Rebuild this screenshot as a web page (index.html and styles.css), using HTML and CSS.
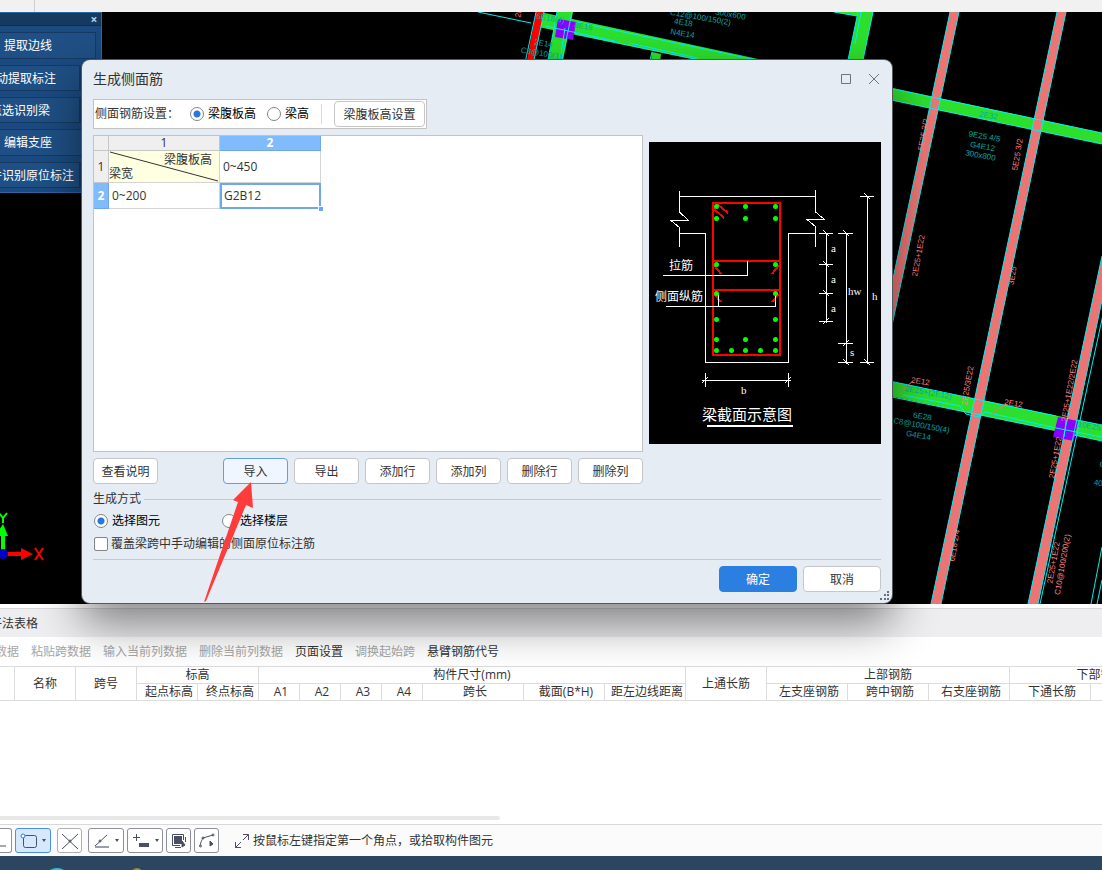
FILE: index.html
```html
<!DOCTYPE html>
<html lang="zh-CN">
<head>
  <meta charset="utf-8">
  <meta name="viewport" content="width=device-width, initial-scale=1.0">
  <title>生成侧面筋</title>
  <link rel="stylesheet" href="styles.css">
</head>
<body>
  <div class="ribbon-edge"><span></span></div>

  <main class="workspace">
    <svg class="cad" viewBox="0 12 1102 592" preserveAspectRatio="xMinYMin slice">
      <!-- green beams -->
      <g class="beam-green">
        <path d="M557 12H573L563 60L552 110H538L548 60Z"/>
        <path d="M858 12H873L863 60L853 110H838L848 60Z"/>
        <path d="M540 12L1102 133V144L538 27Z"/>
        <path d="M834 12H860L857 16Z"/>
        <path d="M652 52L661 54L659 70H650Z"/>
        <path d="M880 379L1102 425V441L880 394Z"/>
      </g>
      <path class="beam-red" d="M536 12H544L534 60L524 100H517L527 60Z"/>
      <!-- pink beams -->
      <g class="beam-pink">
        <path d="M950 12H959L891 330H882Z"/>
        <path d="M1057 12H1066L941 604H931Z"/>
        <path d="M1102 256V300L1038 604H1028Z"/>
      </g>
      <g class="column">
        <path d="M558 19L576 22L573 40L555 37Z"/>
        <path d="M1058 417L1078 421L1074 441L1053 437Z"/>
      </g>
      <g class="edge">
        <path d="M950 12L882 330M959 12L891 330M1057 12L931 604M1066 12L941 604M1102 256L1028 604M1102 300L1038 604M1104 310L1040 604"/>
        <path d="M1091 604L1102 547M1097 604L1102 580M536 12L517 100M544 12L534 60M557 12L548 60M572 12L562 60M858 12L848 60M873 12L863 60M861 12L855 44"/>
        <path d="M478 12L531 23M576 22L1102 133M575 34L1102 144M834 12L857 16M545 26L615 41M629 43L698 58M565 28L560 60"/>
        <path d="M880 379L1056 416M1077 420L1102 425M880 394L892 397L1054 430M1074 435L1102 441M903 395L960 406L966 414L978 417L985 412L1056 428L1102 437M1066 421L1064 437M652 52L650 60"/>
      </g>
      <g class="leader"><path d="M899 393L913 381M992 414L1006 404"/></g>
      <g class="note note-teal">
        <text transform="translate(730 17) rotate(10)">300x600</text>
        <text transform="translate(700 20) rotate(10)">C12@100/150(2)</text>
        <text transform="translate(683 25) rotate(10)">4E18</text>
        <text transform="translate(682 36) rotate(10)">N4E14</text>
        <text transform="translate(583 29) rotate(10)">8E18</text>
        <text transform="translate(550 21) rotate(10)">6E18(4)</text>
        <text transform="translate(543 46) rotate(10)">2E14</text>
        <text transform="translate(541 56) rotate(10)">C8@100(1)</text>
        <text transform="translate(988 118) rotate(10)">2E32</text>
        <text transform="translate(984 139) rotate(10)">9E25 4/5</text>
        <text transform="translate(982 149) rotate(10)">G4E12</text>
        <text transform="translate(980 158) rotate(10)">300x800</text>
        <text transform="translate(928 395) rotate(10)">2E25+(2E12)</text>
        <text transform="translate(922 419) rotate(10)">6E28</text>
        <text transform="translate(921 428) rotate(10)">C8@100/150(4)</text>
        <text transform="translate(918 438) rotate(10)">G4E14</text>
        <text transform="translate(1092 429) rotate(10)">10E25 5</text>
        <text transform="translate(1102 467) rotate(10)">C</text>
        <text transform="translate(1100 486) rotate(10)">400</text>
      </g>
      <g class="note note-pink">
        <text transform="translate(521 13) rotate(-80)">2E</text>
        <text transform="translate(920 384) rotate(10)">2E12</text>
        <text transform="translate(1013 406) rotate(10)">2E12</text>
        <text transform="translate(926 135) rotate(-80)">5E25 2/2</text>
        <text transform="translate(921 256) rotate(-80)">2E25+1E22</text>
        <text transform="translate(1020 155) rotate(-80)">5E25 3/2</text>
        <text transform="translate(1015 276) rotate(-80)">3E25</text>
        <text transform="translate(970 386) rotate(-80)">2E25/3E22</text>
        <text transform="translate(1072 391) rotate(-80)">2E25+1E22/2E22</text>
        <text transform="translate(1058 458) rotate(-80)">2E25+1E22</text>
        <text transform="translate(957 546) rotate(-80)">6E18 2/4</text>
        <text transform="translate(1056 563) rotate(-80)">2E25+1E22</text>
        <text transform="translate(1065 565) rotate(-80)">C10@100/200(2)</text>
      </g>
      <!-- axis marker -->
      <path fill="#0f0" d="M1 552V536H-5L3 524L8 536H5V552Z"/>
      <path fill="#f00" d="M7 552H21V548L33 554L21 560V556H7Z"/>
      <circle cx="3" cy="554" r="5" fill="#0000c8"/>
      <path class="axis-y" d="M-1 513L3 518L7 513M3 518V523"/>
      <path class="axis-x" d="M35 548L43 560M43 548L35 560"/>
    </svg>

    <aside class="palette">
      <div class="palette-head"><button class="palette-close" aria-label="关闭">×</button></div>
      <div class="palette-body">
        <button class="tool">提取边线</button>
        <div class="split"><button class="tool">自动提取标注</button><button class="tool-more" aria-label="更多"></button></div>
        <div class="split"><button class="tool">点选识别梁</button><button class="tool-more" aria-label="更多"></button></div>
        <button class="tool">编辑支座</button>
        <div class="split"><button class="tool">单构件识别原位标注</button><button class="tool-more" aria-label="更多"></button></div>
      </div>
    </aside>

    <section class="dialog" role="dialog" aria-labelledby="dialog-title">
      <header class="dialog-head">
        <h1 id="dialog-title">生成侧面筋</h1>
        <button class="win-btn" aria-label="最大化"><svg width="12" height="12"><path d="M1.5 1.5H10.5V10.5H1.5Z"/></svg></button>
        <button class="win-btn" aria-label="关闭"><svg width="12" height="12"><path d="M1 1L11 11M11 1L1 11"/></svg></button>
      </header>

      <div class="dialog-body">
        <div class="settings">
          <span class="settings-label">侧面钢筋设置：</span>
          <label class="choice"><input type="radio" name="height" checked>梁腹板高</label>
          <label class="choice"><input type="radio" name="height">梁高</label>
          <span class="divider"></span>
          <button class="btn btn-wide">梁腹板高设置</button>
        </div>

        <div class="main-row">
          <div class="sheet">
            <table class="grid">
              <tr><th class="corner"></th><th class="col-a">1</th><th class="col-b on">2</th></tr>
              <tr class="row-tall">
                <th>1</th>
                <td class="slash">
                  <svg viewBox="0 0 110 31" preserveAspectRatio="none"><path d="M1 1L109 30"/></svg>
                  <div class="slash-top">梁腹板高</div>
                  <div class="slash-bottom">梁宽</div>
                </td>
                <td>0~450</td>
              </tr>
              <tr class="row-low"><th class="on">2</th><td>0~200</td><td class="active">G2B12<i class="handle"></i></td></tr>
            </table>
          </div>

          <svg class="section" viewBox="649 142 232 302">
            <rect x="649" y="142" width="232" height="302"/>
            <g class="ln" shape-rendering="crispEdges">
              <path d="M679.5 191V212L688.5 220.5H671L679.5 227.5V247M679 196.5H815.5M815.5 190V212L824.5 219.5H807L815.5 226.5V247M679 233.5H705.5V362.5H788.5V233.5H815"/>
              <path d="M705.5 373V387M788.5 373V387M702 380.5H791M702 383L708 377M785 383L791 377"/>
              <path d="M826.5 233V323M846.5 233V364M867.5 196V364"/>
              <path d="M819 233.5H833M819 264.5H833M819 293.5H833M819 321.5H833M838 233.5H853M838 343.5H853M838 362.5H853M860 196.5H874M860 362.5H874"/>
              <path d="M823 230L829 236M823 261L829 267M823 290L829 296M823 324L829 318M843 230L849 236M843 346L849 340M843 359L849 365M864 193L870 199M864 359L870 365"/>
            </g>
            <g class="bar" shape-rendering="crispEdges">
              <path d="M713 203H780V355H713ZM713 261H780M713 290H780"/>
              <path d="M717 204L728 213M714 209L724 218M714 265L721 274M779 265L772 274M714 294L721 302M779 294L772 302"/>
            </g>
            <g class="ln" shape-rendering="crispEdges">
              <path d="M663 275.5H747.5V261M666 306.5H775.5V295M718.5 293V306"/>
              <path stroke-width="2" d="M707 426H793"/>
            </g>
            <path class="dots" d="M716.5 206.5h0M745.5 206.5h0M775.5 206.5h0M716.5 218.5h0M745.5 218.5h0M775.5 218.5h0M716.5 264.5h0M775.5 264.5h0M716.5 293.5h0M775.5 293.5h0M716.5 319.5h0M775.5 319.5h0M716.5 339.5h0M745.5 339.5h0M775.5 339.5h0M716.5 350.5h0M731.5 350.5h0M745.5 350.5h0M760.5 350.5h0M775.5 350.5h0"/>
            <g class="cap">
              <text x="669" y="270">拉筋</text>
              <text x="655" y="301">侧面纵筋</text>
              <text class="cap-title" x="702" y="420">梁截面示意图</text>
            </g>
            <g class="cap cap-dim">
              <text x="831" y="252">a</text>
              <text x="831" y="283">a</text>
              <text x="831" y="312">a</text>
              <text x="848" y="295">hw</text>
              <text x="872" y="300">h</text>
              <text x="850" y="356">s</text>
              <text x="741" y="394">b</text>
            </g>
          </svg>
        </div>

        <div class="actions">
          <button class="btn btn-help">查看说明</button>
          <button class="btn btn-hover">导入</button>
          <button class="btn">导出</button>
          <button class="btn">添加行</button>
          <button class="btn">添加列</button>
          <button class="btn">删除行</button>
          <button class="btn">删除列</button>
        </div>

        <div class="legend">生成方式</div>
        <div class="modes">
          <label class="choice"><input type="radio" name="mode" checked>选择图元</label>
          <label class="choice"><input type="radio" name="mode">选择楼层</label>
        </div>
        <label class="choice cover"><input type="checkbox">覆盖梁跨中手动编辑的侧面原位标注筋</label>

        <footer class="confirm">
          <button class="btn btn-primary">确定</button>
          <button class="btn">取消</button>
        </footer>
      </div>
      <svg class="grip" width="9" height="9"><path d="M7 0h2v2h-2zM4 3h2v2h-2zM7 3h2v2h-2zM0 7h2v2h-2zM4 7h2v2h-2zM7 7h2v2h-2z"/></svg>
      <svg class="pointer" width="50" height="120" viewBox="204 482 50 120"><path d="M251 482L233 500L238 502L204 602L206 601L246 505L253 508Z"/></svg>
    </section>
  </main>

  <section class="dock">
    <h2 class="dock-title">梁平法表格</h2>
    <div class="dock-tools">
      <button disabled>复制跨数据</button>
      <button disabled>粘贴跨数据</button>
      <button disabled>输入当前列数据</button>
      <button disabled>删除当前列数据</button>
      <button>页面设置</button>
      <button disabled>调换起始跨</button>
      <button>悬臂钢筋代号</button>
    </div>
    <div class="dock-body">
      <table class="spans">
        <colgroup>
          <col class="w15"><col class="w61"><col class="w61"><col class="w61"><col class="w61">
          <col class="w41"><col class="w41"><col class="w41"><col class="w41"><col class="w101">
          <col class="w81"><col class="w81"><col class="w81"><col class="w81"><col class="w81"><col class="w81">
          <col class="w81"><col class="w101">
        </colgroup>
        <tr>
          <th rowspan="2"></th>
          <th rowspan="2">名称</th>
          <th rowspan="2">跨号</th>
          <th colspan="2">标高</th>
          <th colspan="7">构件尺寸(mm)</th>
          <th rowspan="2">上通长筋</th>
          <th colspan="3">上部钢筋</th>
          <th colspan="2">下部钢筋</th>
        </tr>
        <tr class="sub">
          <th>起点标高</th><th>终点标高</th>
          <th>A1</th><th>A2</th><th>A3</th><th>A4</th>
          <th>跨长</th><th>截面(B*H)</th><th>距左边线距离</th>
          <th>左支座钢筋</th><th>跨中钢筋</th><th>右支座钢筋</th>
          <th>下通长筋</th><th>下部钢筋</th>
        </tr>
      </table>
    </div>
    <div class="scroll-thumb"></div>
  </section>

  <footer class="status">
    <button class="ico ico-cut" aria-label="直线"><svg width="12" height="16"><path d="M0 13H6"/></svg></button>
    <button class="ico ico-drop ico-on" aria-label="矩形"><svg width="17" height="16"><rect x="3.5" y="2.5" width="13" height="12" rx="2"/><circle class="pt" cx="3" cy="3" r="2"/></svg><i class="caret"></i></button>
    <button class="ico ico-dim" aria-label="交点"><svg width="16" height="16"><path d="M0 1L16 16M16 1L0 16"/><circle cx="8" cy="8" r="1"/></svg></button>
    <button class="ico ico-drop" aria-label="角度"><svg width="16" height="16"><path d="M13 2L1 13"/><path class="base" d="M1 14H15"/><circle cx="6" cy="8" r="1"/></svg><i class="caret"></i></button>
    <button class="ico ico-drop ico-join" aria-label="偏移"><svg width="18" height="16"><path d="M1 4.5H8M4.5 1V8"/><rect class="fill" x="7.500" y="10.500" width="9" height="3"/></svg><i class="caret"></i></button>
    <button class="ico ico-join" aria-label="批量选择"><svg width="16" height="16"><rect class="fill" x="3.5" y="3.5" width="7" height="7"/><path d="M1.5 1.5H12.5V7M1.5 1.5V12.5H9M14.5 4V9M4 14.5H10"/><path class="fill" d="M11 8L14 12L11 14Z"/></svg></button>
    <button class="ico ico-join" aria-label="折线选择"><svg width="16" height="16"><path d="M1 13C2 8 3 7 4 5L14 2"/><circle cx="1.5" cy="13" r="1"/><circle cx="4" cy="5" r="1"/><circle cx="14" cy="2" r="1"/><path class="fill" d="M11 8L14 11L11 13Z"/></svg></button>
    <svg class="hint-ico" width="16" height="16"><path d="M9 1.5H14.5V7M14.5 1.5L9 7M1.5 9V14.5H7M1.5 14.5L7 9"/></svg>
    <span>按鼠标左键指定第一个角点，或拾取构件图元</span>
  </footer>
  <div class="taskbar"><svg width="160" height="14"><circle cx="57" cy="25" r="13" fill="#2ec4d6"/><circle cx="137" cy="18" r="6" fill="#a08a2c"/></svg></div>
</body>
</html>
```

FILE: styles.css
```css
* {
  box-sizing: border-box;
}

body {
  margin: 0;
  height: 100vh;
  display: flex;
  flex-direction: column;
  overflow: hidden;
  background-color: white;
  color: #333;
  font: 12px/16px "Open Sans", "Noto Sans CJK SC", sans-serif;
}

button {
  font: inherit;
  color: inherit;
  padding: 0;
  margin: 0;
  border: none;
  background: none;
}

.ribbon-edge {
  flex: none;
  display: flex;
  height: 12px;
  background-color: #f1f1f1;
}

.ribbon-edge span {
  width: 35px;
  border-right: 1px solid #d0d0d0;
}

.workspace {
  flex: 1;
  min-height: 0;
  position: relative;
  background-color: black;
}

/* drawing area */
.cad {
  position: absolute;
  width: 100%;
  height: 100%;
}

.beam-green { fill: #2ddf2d; }
.beam-red { fill: #f00; }
.beam-pink { fill: #ec7474; }
.column { fill: #8c00ff; }

.edge {
  fill: none;
  stroke: #00f0f0;
}

.leader { stroke: #ec7474; }

.note {
  font: 8px "Liberation Sans Narrow", "Liberation Sans", sans-serif;
  text-anchor: middle;
}

.note-teal { fill: #00a8a8; }
.note-pink { fill: #ff8080; }

.axis-y,
.axis-x {
  fill: none;
  stroke: #0f0;
  stroke-width: 2;
}

.axis-x { stroke: #f00; }

/* tool palette, docked half outside the window */
.palette {
  position: absolute;
  left: -46px;
  top: 0;
  width: 148px;
  background-color: #1a4a80;
  border: 1px solid #2a65a5;
  color: white;
}

.palette-head {
  height: 13px;
  display: flex;
  justify-content: flex-end;
  background-color: #15395f;
  border-bottom: 1px solid #102f50;
}

.palette-close {
  width: 14px;
  line-height: 14px;
  font-weight: bold;
  color: #b5d2ef;
}

.palette-body {
  display: flex;
  flex-direction: column;
  gap: 6px;
  padding: 6px 5px 4px;
}

.tool {
  flex: 1;
  height: 26px;
  line-height: 24px;
  padding-top: 1px;
  white-space: nowrap;
  background-color: #1f4f84;
  border: 1px solid #143a64;
}

.split {
  display: flex;
}

.tool-more {
  width: 16px;
  background-color: #1f4f84;
  border: 1px solid #143a64;
}

/* dialog */
.dialog {
  position: absolute;
  left: 82px;
  right: 210px;
  top: 48px;
  z-index: 2;
  border-radius: 8px;
  background-color: #e5ecf3;
  box-shadow: 0 0 0 1px #55595e, 0 20px 46px rgba(0, 0, 0, 0.48);
}

.dialog-head {
  display: flex;
  align-items: center;
  height: 39px;
  padding: 0 4px 2px 11px;
}

.dialog-head h1 {
  flex: 1;
  margin: 0;
  font-size: 14px;
  font-weight: normal;
}

.win-btn {
  width: 28px;
  height: 28px;
  display: grid;
  place-items: center;
}

.win-btn path {
  fill: none;
  stroke: #707478;
}

.dialog-body {
  padding: 0 11px 11px;
}

.settings {
  width: 334px;
  height: 30px;
  display: flex;
  align-items: center;
  padding: 0 1px;
  border: 1px solid #c3c3c3;
  background-color: white;
}

.settings-label {
  width: 95px;
}

.choice {
  display: flex;
  align-items: center;
  gap: 4px;
  color: black;
}

.settings .choice {
  margin-right: 11px;
}

.choice input {
  appearance: none;
  flex: none;
  width: 14px;
  height: 14px;
  margin: 0;
  border: 1px solid #858585;
  border-radius: 2px;
  background-color: white;
}

.choice input[type="radio"] {
  border-radius: 50%;
}

.choice input[type="radio"]:checked {
  background: radial-gradient(circle, #2478e0 3px, white 4px);
}

.divider {
  width: 1px;
  height: 20px;
  margin-left: 1px;
  background-color: #d8d8d8;
}

.btn {
  width: 65px;
  height: 26px;
  padding-top: 1px;
  border: 1px solid #c6c6c6;
  border-radius: 4px;
  background-color: white;
}

.btn-wide {
  width: 91px;
  margin-left: auto;
}

.main-row {
  display: flex;
  align-items: flex-start;
  gap: 6px;
  margin: 6px 0;
}

.sheet {
  flex: 1;
  height: 317px;
  border: 1px solid #c3c3c3;
  background-color: white;
}

.grid {
  border-spacing: 0;
  table-layout: fixed;
  width: 227px;
  line-height: 14px;
}

.grid th,
.grid td {
  height: 15px;
  padding: 0;
  border-right: 1px solid #d4d4d4;
  border-bottom: 1px solid #d4d4d4;
}

.grid th {
  background-color: #efefef;
  border-color: #c6c6c6;
  font-weight: normal;
}

.grid th.on {
  background-color: #80bbfb;
  border-color: #6fa8e8;
  color: white;
  font-weight: bold;
}

.grid td {
  padding-left: 3px;
}

.corner { width: 15px; }
.col-a { width: 111px; }
.col-b { width: 101px; }

.grid .row-tall > * { height: 32px; }
.grid .row-low > * { height: 26px; }

.grid .slash {
  position: relative;
  padding: 0 7px 0 0;
  background-color: #ffffe1;
}

.slash svg {
  position: absolute;
  left: 0;
  top: 0;
  width: 100%;
  height: 100%;
}

.slash path {
  stroke: #333;
}

.slash-top {
  text-align: right;
}

.grid .active {
  position: relative;
  border: 2px solid #6aa9ea;
  padding-left: 2px;
}

.handle {
  position: absolute;
  right: -4px;
  bottom: -4px;
  width: 5px;
  height: 5px;
  border: 1px solid white;
  border-width: 1px 0 0 1px;
  background-color: #6aa9ea;
}

/* beam section diagram */
.section {
  flex: none;
  width: 232px;
  height: 302px;
  margin-top: 7px;
}

.ln {
  fill: none;
  stroke: white;
}

.bar {
  fill: none;
  stroke: red;
  stroke-width: 2;
}

.dots {
  stroke: #0f0;
  stroke-width: 5;
  stroke-linecap: round;
}

.cap {
  fill: white;
  font: 12px "Liberation Serif", "Noto Sans CJK SC", serif;
}

.cap-title {
  font-size: 15px;
}

.cap-dim {
  font-size: 11px;
}

.actions {
  display: flex;
  gap: 6px;
  margin-right: 238px;
}

.btn-help {
  margin-right: auto;
}

.btn-hover {
  border-color: #639cea;
  background-color: #f0f6ff;
}

.legend {
  display: flex;
  align-items: center;
  gap: 3px;
  height: 18px;
  margin-top: 6px;
}

.legend::after {
  content: "";
  flex: 1;
  border-top: 1px solid #c6c8ca;
}

.modes {
  display: flex;
  gap: 62px;
  margin: 5px 0 7px;
  padding-left: 1px;
}

.cover {
  gap: 3px;
  padding-left: 1px;
  color: #333;
}

.confirm {
  display: flex;
  justify-content: flex-end;
  gap: 6px;
  margin-top: 7px;
  padding-top: 6px;
  border-top: 1px solid #c6c8ca;
}

.confirm .btn {
  width: 78px;
}

.confirm .btn-primary {
  border-color: #2b7fe1;
  background-color: #2b7fe1;
  color: white;
}

.grip {
  position: absolute;
  right: 3px;
  bottom: 3px;
  fill: #6a7078;
}

.pointer {
  position: absolute;
  left: 122px;
  top: 422px;
  fill: #ff3b3b;
}

/* bottom dock */
.dock {
  flex: none;
  padding-top: 4px;
  overflow: hidden;
}

.dock-title {
  height: 29px;
  margin: 0;
  border-top: 1px solid #d8d8da;
  background-color: #eeeef0;
  font-size: 12px;
  font-weight: normal;
  line-height: 30px;
  text-indent: -22px;
}

.dock-tools {
  display: flex;
  gap: 12px;
  height: 29px;
  margin-left: -41px;
}

.dock-tools button {
  white-space: nowrap;
}

.dock-tools button:disabled {
  color: #a6a6a6;
}

.dock-body {
  height: 150px;
  overflow: hidden;
}

.spans {
  table-layout: fixed;
  width: 1192px;
  border-spacing: 0;
  border-top: 1px solid #dcdcdc;
}

.spans th {
  height: 17px;
  padding: 0;
  border-right: 1px solid #dcdcdc;
  border-bottom: 1px solid #dcdcdc;
  font-weight: normal;
  line-height: 16px;
  white-space: nowrap;
}

.spans .sub th {
  padding-left: 4px;
}

.w15 { width: 15px; }
.w41 { width: 41px; }
.w61 { width: 61px; }
.w81 { width: 81px; }
.w101 { width: 101px; }

.scroll-thumb {
  width: 500px;
  height: 4px;
  margin-bottom: 4px;
  border-radius: 0 2px 2px 0;
  background-color: #e8e8e8;
}

/* status bar */
.status {
  flex: none;
  display: flex;
  align-items: center;
  height: 32px;
  border-top: 1px solid #d8d8d8;
  background-color: #fbfbfb;
}

.ico {
  width: 25px;
  height: 25px;
  display: flex;
  align-items: center;
  justify-content: center;
  gap: 5px;
  margin-right: 6px;
  border: 1px solid #8d9096;
  border-radius: 3px;
  background-color: white;
}

.ico svg,
.hint-ico {
  flex: none;
  fill: none;
  stroke: #4a4f63;
}

.ico .fill {
  fill: #4a4f63;
}

.ico .base {
  stroke: #9a9dab;
  stroke-width: 2;
}

.ico .pt {
  fill: white;
  stroke: #2b7fe1;
}

.ico-cut {
  width: 12px;
  margin-right: 3px;
  border-left: none;
  border-radius: 0 3px 3px 0;
}

.ico-drop {
  width: 36px;
}

.ico-on {
  border-color: #4a90e6;
  background-color: #d6e8fc;
}

.ico-dim {
  border-color: #b0b0b0;
}

.ico:has(+ .ico-join) {
  margin-right: 3px;
}

.caret {
  border: 2px solid transparent;
  border-top: 3px solid #4a4f63;
  border-bottom: none;
}

.hint-ico {
  margin: 0 3px 0 9px;
}

.taskbar {
  flex: none;
  height: 14px;
  overflow: hidden;
  background-color: #2c4661;
}
```
